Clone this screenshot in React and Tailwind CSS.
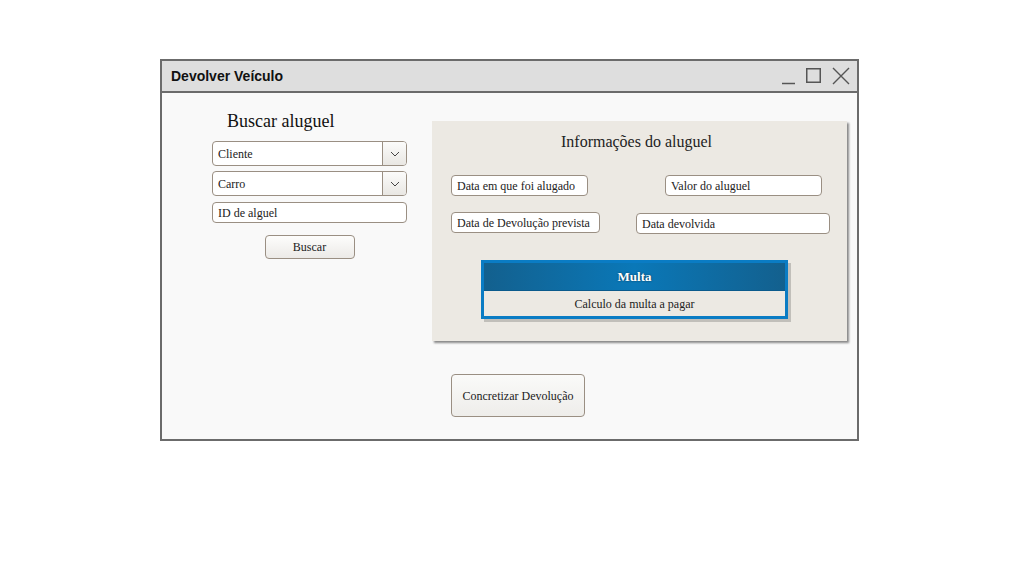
import React from "react";

function SelectBox({ label }) {
  return (
    <div className="flex h-[25px] w-[195px] rounded-[4px] border border-[#9a8f83] bg-white overflow-hidden">
      <div className="flex-1 flex items-center pl-[5px] text-[12px] text-[#222]">{label}</div>
      <div className="w-[24px] flex items-center justify-center border-l border-[#9a8f83] bg-gradient-to-b from-[#fbfbfa] to-[#e9e7e3]">
        <svg width="10" height="6" viewBox="0 0 10 6" fill="none">
          <path d="M1 1l4 4 4-4" stroke="#444" strokeWidth="1" />
        </svg>
      </div>
    </div>
  );
}

function Field({ label, className }) {
  return (
    <div className={`h-[21px] flex items-center pl-[5px] rounded-[4px] border border-[#9a8f83] bg-white text-[12px] text-[#222] ${className}`}>
      {label}
    </div>
  );
}

export default function App() {
  return (
    <div className="w-[1036px] h-[563px] bg-white pt-[59px] pl-[160px]" style={{ fontFamily: '"Liberation Serif", serif' }}>
      <div className="w-[699px] h-[382px] border-2 border-[#6b6b6b] bg-[#f9f9f9] flex flex-col">
        {/* title bar */}
        <div className="h-[32px] bg-[#dedede] border-b-2 border-[#6b6b6b] flex items-center pl-[9px] pr-[3px]">
          <div className="flex-1 text-[14px] text-[#111] font-bold" style={{ fontFamily: '"Liberation Sans", Arial, sans-serif' }}>
            Devolver Veículo
          </div>
          <svg width="76" height="20" viewBox="0 0 76 20" fill="none">
            <path d="M4 17.5h13" stroke="#555" strokeWidth="1.5" />
            <rect x="28.75" y="2.75" width="13.5" height="13.5" stroke="#555" strokeWidth="1.5" />
            <path d="M55 2l16 16M71 2L55 18" stroke="#555" strokeWidth="1.4" />
          </svg>
        </div>

        {/* body */}
        <div className="flex-1 flex pl-[50px]">
          <div className="w-[195px] flex flex-col items-center pt-[17px]">
            <div className="self-start ml-[15px] text-[18px] text-[#111] leading-[22px] h-[31px]">Buscar aluguel</div>
            <div className="flex flex-col gap-[5px]">
              <SelectBox label="Cliente" />
              <SelectBox label="Carro" />
            </div>
            <Field label="ID de alguel" className="w-[195px] mt-[6px]" />
            <button className="mt-[12px] h-[24px] w-[90px] rounded-[4px] border border-[#9a8f83] bg-gradient-to-b from-[#fdfdfc] to-[#eceae7] text-[12px] text-[#222]">
              Buscar
            </button>
          </div>

          <div className="ml-[25px] flex flex-col pt-[28px]">
            <div className="w-[415px] h-[220px] bg-[#ece9e3] shadow-[2px_2px_2px_rgba(0,0,0,0.45)] flex flex-col items-center pt-[12px]">
              <div className="text-[16px] text-[#222] leading-[18px] pr-[6px]">Informações do aluguel</div>
              <div className="w-full h-[80px] mt-[24px]">
                <div className="flex pl-[19px]">
                  <Field label="Data em que foi alugado" className="w-[137px]" />
                  <Field label="Valor do aluguel" className="w-[157px] ml-[77px]" />
                </div>
                <div className="flex pl-[19px] mt-[16px]">
                  <Field label="Data de Devolução prevista" className="w-[149px]" />
                  <Field label="Data devolvida" className="w-[194px] ml-[36px] mt-[1px]" />
                </div>
              </div>
              <div className="mt-[5px] self-start ml-[49px] w-[307px] h-[59px] border-2 border-[#0a7cc4] bg-[#0a7cc4] shadow-[3px_3px_0_rgba(0,0,0,0.18)] flex flex-col p-[1px]">
                <div className="h-[27px] flex items-center justify-center bg-[linear-gradient(90deg,#13608e_0%,#0a78b8_50%,#13608e_100%)] text-white font-bold text-[13px] [text-shadow:0_0_2px_rgba(0,0,0,0.6)]">
                  Multa
                </div>
                <div className="flex-1 flex items-center justify-center bg-[#ece9e3] border-t border-[#0a5a8c] text-[12px] text-[#222]">
                  Calculo da multa a pagar
                </div>
              </div>
            </div>
            <button className="mt-[33px] ml-[19px] h-[43px] w-[134px] rounded-[4px] border border-[#9a8f83] bg-gradient-to-b from-[#fafaf9] to-[#eeedea] text-[12px] text-[#222]">
              Concretizar Devolução
            </button>
          </div>
        </div>
      </div>
    </div>
  );
}
